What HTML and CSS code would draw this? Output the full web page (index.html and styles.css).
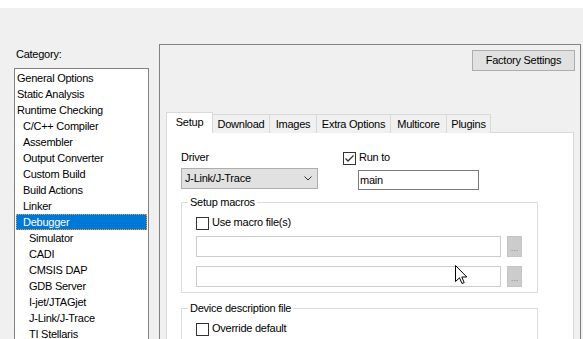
FILE: index.html
```html
<!DOCTYPE html>
<html>
<head>
<meta charset="utf-8">
<link rel="stylesheet" href="styles.css">
</head>
<body>
<div class="topbar"></div>
<div class="main">
  <div class="category">
    <div class="cat-label">Category:</div>
    <ul class="listbox">
      <li class="item">General Options</li>
      <li class="item">Static Analysis</li>
      <li class="item">Runtime Checking</li>
      <li class="item sub">C/C++ Compiler</li>
      <li class="item sub">Assembler</li>
      <li class="item sub">Output Converter</li>
      <li class="item sub">Custom Build</li>
      <li class="item sub">Build Actions</li>
      <li class="item sub">Linker</li>
      <li class="item sub selected">Debugger</li>
      <li class="item subsub">Simulator</li>
      <li class="item subsub">CADI</li>
      <li class="item subsub">CMSIS DAP</li>
      <li class="item subsub">GDB Server</li>
      <li class="item subsub">I-jet/JTAGjet</li>
      <li class="item subsub">J-Link/J-Trace</li>
      <li class="item subsub">TI Stellaris</li>
    </ul>
  </div>
  <div class="panel">
    <div class="panel-top"><div class="btn factory">Factory Settings</div></div>
    <div class="tabs">
      <div class="tab active t-setup">Setup</div>
      <div class="tab t-download">Download</div>
      <div class="tab t-images">Images</div>
      <div class="tab t-extra">Extra Options</div>
      <div class="tab t-multi">Multicore</div>
      <div class="tab t-plugins">Plugins</div>
    </div>
    <div class="tabpage">
      <div class="row1">
        <div class="driver">
          <div class="label">Driver</div>
          <div class="select">
            <span>J-Link/J-Trace</span>
            <svg class="chev" width="8" height="5" viewBox="0 0 8 5"><polyline points="0.5,0.5 4,4 7.5,0.5" fill="none" stroke="#333" stroke-width="1"/></svg>
          </div>
        </div>
        <div class="runto">
          <div class="check">
            <span class="box"><svg width="11" height="11" viewBox="0 0 11 11"><polyline points="1.5,5.5 4,8 9.5,2.5" fill="none" stroke="#333" stroke-width="1.3"/></svg></span>
            <span>Run to</span>
          </div>
          <div class="textbox">main</div>
        </div>
      </div>
      <fieldset class="group macros">
        <legend>Setup macros</legend>
        <div class="group-body">
          <div class="check"><span class="box"></span><span>Use macro file(s)</span></div>
          <div class="file-row"><div class="field"></div><div class="browse">...</div></div>
          <div class="file-row"><div class="field"></div><div class="browse">...</div></div>
        </div>
      </fieldset>
      <fieldset class="group device">
        <legend>Device description file</legend>
        <div class="group-body">
          <div class="check"><span class="box"></span><span>Override default</span></div>
        </div>
      </fieldset>
    </div>
  </div>
</div>
<svg class="cursor" width="13" height="20" viewBox="0 0 13 20"><path d="M0.5 0.5 L0.5 16.5 L4.5 12.8 L7 18.5 L9.2 17.6 L6.8 12 L11.8 12 Z" fill="#fff" stroke="#000" stroke-width="1" stroke-linejoin="miter"/></svg>
</body>
</html>
```
FILE: styles.css
```css
html, body {
  margin: 0;
  padding: 0;
}
body {
  background: #f0f0f0;
  font-family: "Liberation Sans", Arial, sans-serif;
  font-size: 11px;
  letter-spacing: -0.25px;
  line-height: 13px;
  color: #000;
  height: 339px;
  overflow: hidden;
}
.topbar {
  height: 8px;
  background: #fff;
}
.main {
  display: flex;
  align-items: flex-start;
  padding-left: 14px;
  gap: 10px;
}
.category {
  width: 135px;
  padding-top: 40px;
}
.cat-label {
  padding-left: 2px;
  margin-bottom: 7px;
}
.listbox {
  list-style: none;
  margin: 0;
  padding: 1px;
  border: 1px solid #828282;
  background: #fff;
  height: 300px;
}
.item {
  height: 16px;
  line-height: 16px;
  padding-left: 1px;
  white-space: nowrap;
}
.item.sub { padding-left: 7px; }
.item.subsub { padding-left: 13px; }
.item.selected {
  background: #0078d7;
  color: #fff;
  outline: 1px dotted #e8a040;
  outline-offset: -1px;
}
.panel {
  width: 422px;
  box-sizing: border-box;
  border: 1px solid #828282;
  margin-top: 36px;
  height: 330px;
  padding: 5px 5px 0 6px;
}
.panel-top {
  display: flex;
  justify-content: flex-end;
}
.btn {
  box-sizing: border-box;
  height: 21px;
  width: 103px;
  border: 1px solid #adadad;
  background: #e1e1e1;
  text-align: center;
  line-height: 19px;
}
.tabs {
  display: flex;
  align-items: flex-end;
  margin-top: 41px;
}
.tab {
  box-sizing: border-box;
  height: 19px;
  padding-top: 1px;
  line-height: 17px;
  border: 1px solid #d9d9d9;
  border-bottom: 0;
  margin-left: -1px;
  background: #f0f0f0;
  white-space: nowrap;
  text-align: center;
}
.tab.active {
  height: 21px;
  padding-top: 1px;
  margin-left: 0;
  background: #fff;
  position: relative;
  z-index: 1;
}
.t-setup { width: 47px; }
.t-download { width: 58px; }
.t-images { width: 48px; }
.t-extra { width: 75px; }
.t-multi { width: 57px; }
.t-plugins { width: 45px; }
.tabpage {
  margin-top: -1px;
  margin-right: 1px;
  border: 1px solid #d9d9d9;
  background: #fff;
  padding: 18px 0 0 14px;
  height: 250px;
}
.row1 {
  display: flex;
  align-items: flex-start;
}
.driver {
  width: 137px;
}
.driver .label {
  margin-bottom: 4px;
}
.select {
  box-sizing: border-box;
  height: 21px;
  border: 1px solid #adadad;
  background: #e1e1e1;
  display: flex;
  align-items: center;
  justify-content: space-between;
  padding: 0 5px 0 3px;
  line-height: 19px;
}
.chev {
  display: block;
}
.runto {
  margin-left: 25px;
}
.check {
  display: flex;
  align-items: flex-start;
  height: 13px;
  line-height: 13px;
}
.box {
  flex: none;
  box-sizing: border-box;
  width: 13px;
  height: 13px;
  border: 1px solid #333;
  background: #fff;
  margin-top: 1px;
  margin-right: 3px;
}
.box svg {
  display: block;
}
.textbox {
  box-sizing: border-box;
  margin: 6px 0 0 15px;
  width: 121px;
  height: 20px;
  border: 1px solid #7a7a7a;
  padding: 0 1px;
  line-height: 18px;
  background: #fff;
}
.group {
  box-sizing: border-box;
  width: 357px;
  min-width: 0;
  margin: 6px 0 0;
  padding: 7px 0 5px 0;
  border: 1px solid #dcdcdc;
}
.group legend {
  padding: 0 2px;
  margin-left: 6px;
  line-height: 13px;
}
.group-body {
  padding-left: 14px;
}
.device {
  margin-top: 9px;
  padding-top: 7px;
  height: 60px;
}
.file-row {
  display: flex;
  gap: 6px;
  margin-top: 7px;
}
.file-row + .file-row {
  margin-top: 9px;
}
.field {
  box-sizing: border-box;
  width: 305px;
  height: 21px;
  border: 1px solid #cccccc;
  background: #fff;
}
.browse {
  box-sizing: border-box;
  width: 15px;
  height: 21px;
  border: 1px solid #c4c4c4;
  background: #cccccc;
  color: #8a8a8a;
  text-align: center;
  font-size: 9px;
  letter-spacing: 0;
  line-height: 23px;
}
.cursor {
  position: absolute;
  left: 455px;
  top: 265px;
}
```
